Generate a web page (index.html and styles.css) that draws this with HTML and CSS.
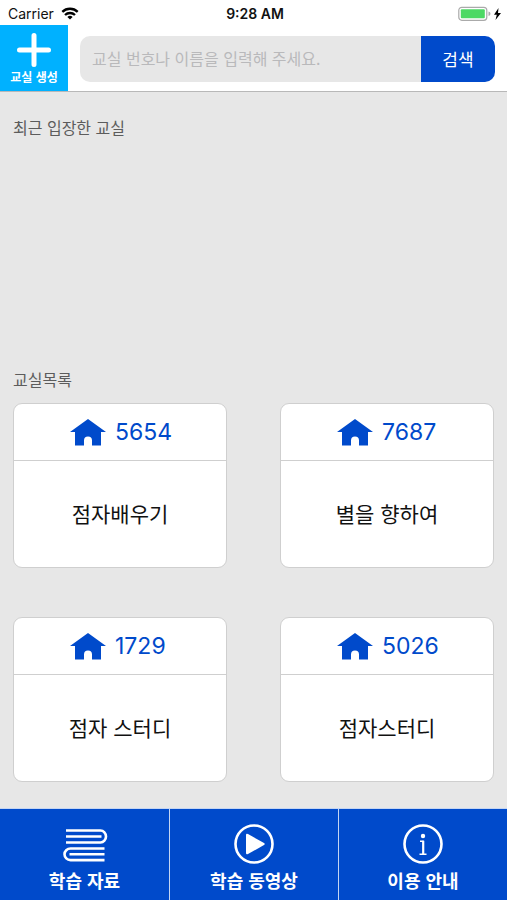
FILE: index.html
```html
<!DOCTYPE html>
<html lang="ko">
<head>
<meta charset="utf-8">
<meta name="viewport" content="width=device-width, initial-scale=1">
<title>교실목록</title>
<link rel="stylesheet" href="styles.css">
</head>
<body>
<svg class="defs" aria-hidden="true">
  <symbol id="house" viewBox="0 0 36 27"><path d="M18 0 36 13H31V26.500H22V21.500a4 4 0 0 0-8 0V26.500H5V13H0Z" fill="currentColor"/></symbol>
</svg>
<div class="status">
  <div class="carrier"><span>Carrier</span>
    <svg width="18" height="13" viewBox="0 0 18 13" fill="none" stroke="#000" stroke-width="2.300"><path d="M1.300 4.900a11 11 0 0 1 15.400 0M4 8a7.200 7.200 0 0 1 10 0"/><path d="M9 12.500 6.400 9.900a3.800 3.800 0 0 1 5.200 0Z" fill="#000" stroke="none"/></svg>
  </div>
  <time class="clock">9:28 AM</time>
  <div class="power">
    <svg width="44" height="16" viewBox="0 0 44 16"><rect x=".8" y="1.300" width="28" height="13" rx="3" fill="#fff" stroke="#aaa" stroke-width="1.200"/><rect x="2.800" y="3.300" width="24" height="9" rx="1" fill="#4cd964"/><path d="M30.500 5.500q2 .5 2 2.300t-2 2.300Z" fill="#aaa"/><path d="M40.500 2 36 8.700h2.800L37.500 14 43 7h-3Z" fill="#000"/></svg>
  </div>
</div>
<header class="header">
  <button class="create" type="button">
    <svg width="36" height="36" viewBox="0 0 36 36" fill="none" stroke="#fff" stroke-width="5" stroke-linecap="round"><path d="M18 3.500v29M3.500 18h29"/></svg>
    <span>교실 생성</span>
  </button>
  <form class="search">
    <input type="text" aria-label="교실 검색" placeholder="교실 번호나 이름을 입력해 주세요.">
    <button type="button">검색</button>
  </form>
</header>
<main class="main">
  <section class="recent"><h2>최근 입장한 교실</h2></section>
  <section class="rooms">
    <h2>교실목록</h2>
    <div class="grid">
      <a class="card" href="#"><span class="number"><svg width="36" height="27"><use href="#house"/></svg><span>5654</span></span><span class="name">점자배우기</span></a>
      <a class="card" href="#"><span class="number"><svg width="36" height="27"><use href="#house"/></svg><span>7687</span></span><span class="name">별을 향하여</span></a>
      <a class="card" href="#"><span class="number"><svg width="36" height="27"><use href="#house"/></svg><span>1729</span></span><span class="name">점자 스터디</span></a>
      <a class="card" href="#"><span class="number"><svg width="36" height="27"><use href="#house"/></svg><span>5026</span></span><span class="name">점자스터디</span></a>
    </div>
  </section>
</main>
<nav class="tabs">
  <a href="#">
    <svg width="46" height="40" viewBox="0 0 46 40" fill="none" stroke="#fff" stroke-width="2.600"><path d="M4 6.500H38.500a5.500 6 0 0 1 0 12H4"/><path d="M4 12.500H39.500" /><path d="M42.500 24.500H8.500a6 5.800 0 0 0 0 11.600H42.500"/><path d="M7.500 30.300H42.500"/></svg>
    <span>학습 자료</span>
  </a>
  <a href="#">
    <svg width="40" height="40" viewBox="0 0 40 40"><circle cx="20" cy="20" r="18.500" fill="none" stroke="#fff" stroke-width="2.600"/><path d="M12 11v18q0 2 2 1L30 21q1.500-1 0-2L14 10q-2-1-2 1Z" fill="#fff"/></svg>
    <span>학습 동영상</span>
  </a>
  <a href="#">
    <svg width="40" height="40" viewBox="0 0 40 40" fill="none" stroke="#fff"><circle cx="20" cy="20" r="18.500" stroke-width="2.600"/><circle cx="20" cy="12" r="2.200" fill="#fff" stroke="none"/><path d="M17 17.300h3.800M16.500 30.200h7" stroke-width="1.400"/><path d="M20.200 16.800v13.400" stroke-width="2.200"/></svg>
    <span>이용 안내</span>
  </a>
</nav>
</body>
</html>
```

FILE: styles.css
```css
* { box-sizing: border-box; }

body {
  margin: 0;
  min-height: 100vh;
  display: flex;
  flex-direction: column;
  background: #e7e7e7;
  color: #111;
  font-family: Inter, "Noto Sans CJK KR", sans-serif;
}

button, input { font: inherit; border: 0; padding: 0; margin: 0; }
a { color: inherit; text-decoration: none; }
svg { display: block; flex: none; }
.defs { position: absolute; width: 0; height: 0; }

.status {
  display: grid;
  grid-template-columns: 1fr auto 1fr;
  align-items: center;
  height: 25px;
  padding: 2px 5px 0 8px;
  background: #fff;
  font-size: 14px;
}
.carrier { display: flex; align-items: center; gap: 7px; }
.clock { font-weight: 600; }
.power { display: flex; justify-content: flex-end; }

.header {
  display: flex;
  height: 67px;
  background: #fff;
  border-bottom: 1px solid #b8b8b8;
}
.create {
  width: 68px;
  display: flex;
  flex-direction: column;
  align-items: center;
  padding-top: 7px;
  gap: 1px;
  background: #00b1ff;
  color: #fff;
  font: bold 12px/16px "Noto Sans CJK KR", sans-serif;
}
.search {
  flex: 1;
  display: flex;
  margin: 11px 12px 9px;
  border-radius: 10px;
  overflow: hidden;
  font-family: "Noto Sans CJK KR", sans-serif;
}
.search input {
  flex: 1;
  min-width: 0;
  padding: 0 12px 2px;
  background: #e7e7e7;
  font-size: 16px;
}
.search input::placeholder { color: #b9b9bb; opacity: 1; }
.search button {
  width: 74px;
  padding-bottom: 2px;
  background: #004acb;
  color: #fff;
  font-size: 17px;
}

.main { flex: 1; padding: 23px 13px 26px; }
h2 {
  margin: 0;
  color: #5c5c5c;
  font: 400 16px/24px "Noto Sans CJK KR", sans-serif;
}
.recent { min-height: 252px; }
.grid {
  display: grid;
  grid-template-columns: 1fr 1fr;
  gap: 49px 53px;
  margin-top: 12px;
}
.card {
  display: flex;
  flex-direction: column;
  height: 165px;
  background: #fff;
  border: 1px solid #cfcfcf;
  border-radius: 9px;
}
.number {
  display: flex;
  align-items: center;
  gap: 9px;
  height: 57px;
  padding-left: 56px;
  border-bottom: 1px solid #cfcfcf;
  color: #004acb;
  font-size: 23px;
}
.name {
  flex: 1;
  display: flex;
  align-items: center;
  justify-content: center;
  padding-bottom: 3px;
  font: 21px/30px "Noto Sans CJK KR", sans-serif;
}

.tabs {
  display: grid;
  grid-template-columns: repeat(3, 1fr);
  height: 92px;
  background: #004acb;
  border-top: 1px solid #c4d5f3;
  color: #fff;
  font: bold 18px/24px "Noto Sans CJK KR", sans-serif;
}
.tabs a {
  display: flex;
  flex-direction: column;
  align-items: center;
  padding-top: 15px;
  gap: 4px;
}
.tabs a + a { border-left: 1px solid #c4d5f3; }
```
